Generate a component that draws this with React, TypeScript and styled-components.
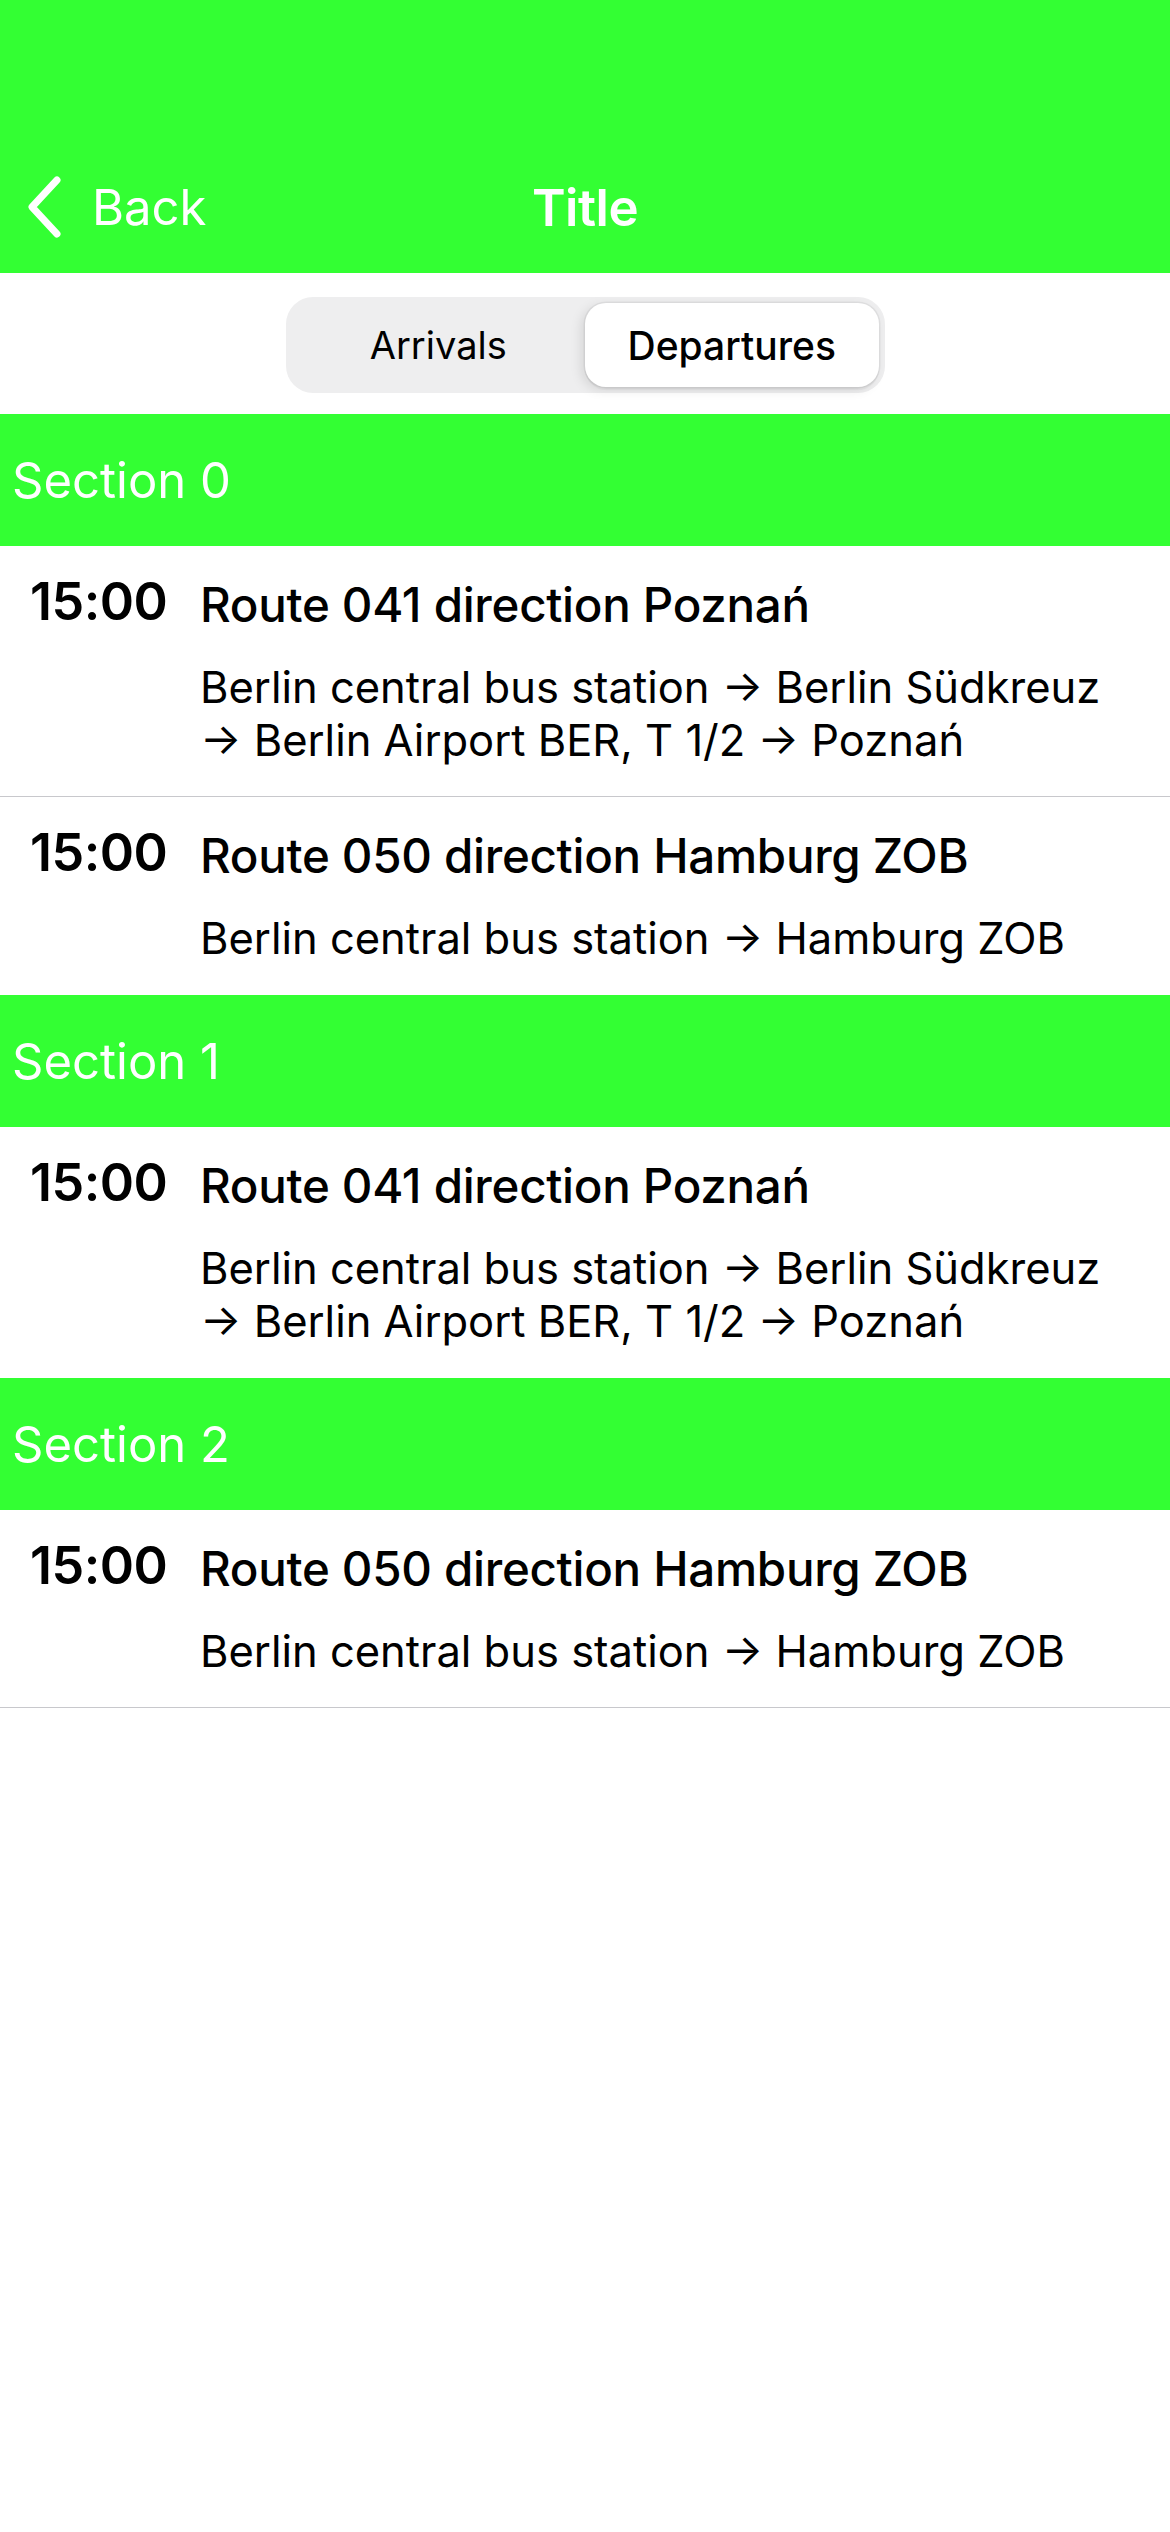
import React from "react";
import styled, { createGlobalStyle } from "styled-components";

const GREEN = "#33ff33";

const GlobalStyle = createGlobalStyle`
  html, body {
    margin: 0;
    padding: 0;
    background: #ffffff;
    font-family: Inter, "Noto Sans", "Liberation Sans", sans-serif;
    -webkit-font-smoothing: antialiased;
  }
  * { box-sizing: border-box; }
`;

const Page = styled.div`
  width: 1170px;
  min-height: 2532px;
  background: #ffffff;
`;

const NavBar = styled.header`
  height: 273px;
  background: ${GREEN};
  display: flex;
  align-items: flex-end;
`;

const NavContent = styled.div`
  height: 132px;
  width: 100%;
  display: grid;
  grid-template-columns: 1fr auto 1fr;
  align-items: center;
`;

const BackButton = styled.button`
  display: flex;
  align-items: center;
  gap: 28px;
  padding: 0 0 0 24px;
  margin: 0;
  border: none;
  background: transparent;
  color: #ffffff;
  font-family: inherit;
  font-size: 49px;
  font-weight: 400;
  justify-self: start;
  cursor: pointer;
`;

const NavTitle = styled.h1`
  margin: 0;
  color: #ffffff;
  font-size: 51px;
  font-weight: 600;
  letter-spacing: -0.5px;
`;

const SegmentWrap = styled.div`
  display: flex;
  justify-content: center;
  padding: 24px 0 21px;
`;

const SegmentControl = styled.div`
  width: 599px;
  height: 96px;
  background: #eeeeef;
  border-radius: 27px;
  padding: 6px;
  display: grid;
  grid-template-columns: 1fr 1fr;
`;

const Segment = styled.div<{ $selected?: boolean }>`
  display: flex;
  align-items: center;
  justify-content: center;
  border-radius: 21px;
  font-size: ${(p) => (p.$selected ? "39px" : "38px")};
  font-weight: ${(p) => (p.$selected ? 500 : 400)};
  color: #000000;
  background: ${(p) => (p.$selected ? "#ffffff" : "transparent")};
  box-shadow: ${(p) =>
    p.$selected
      ? "-4px 3px 12px rgba(0,0,0,0.10), 0 3px 1px rgba(0,0,0,0.04), 0 0 0 1.5px rgba(0,0,0,0.05)"
      : "none"};
`;

const SectionHeader = styled.div`
  height: 132px;
  background: ${GREEN};
  color: #ffffff;
  display: flex;
  align-items: center;
  padding-left: 12px;
  font-size: 49px;
  font-weight: 400;
`;

const Row = styled.div<{ $divider?: boolean }>`
  display: grid;
  grid-template-columns: 170px 1fr;
  padding: 30px 48px 29px 30px;
  border-bottom: 1px solid ${(p) => (p.$divider ? "#c8c8cc" : "transparent")};
`;

const Time = styled.div`
  font-size: 52px;
  line-height: 52px;
  font-weight: 600;
  color: #000000;
  letter-spacing: -0.5px;
`;

const Details = styled.div`
  display: flex;
  flex-direction: column;
  gap: 27px;
`;

const RouteTitle = styled.div`
  font-size: 47.5px;
  line-height: 58px;
  font-weight: 500;
  color: #000000;
  letter-spacing: -0.3px;
`;

const RouteStops = styled.div`
  font-size: 43.5px;
  line-height: 53px;
  font-weight: 400;
  color: #000000;
`;

const Chevron = () => (
  <svg width="40" height="64" viewBox="0 0 40 64" aria-hidden="true">
    <polyline
      points="33,5 8,32 33,59"
      fill="none"
      stroke="#ffffff"
      strokeWidth="7"
      strokeLinecap="round"
      strokeLinejoin="round"
    />
  </svg>
);

type Departure = { time: string; title: string; stops: string };

const poznan: Departure = {
  time: "15:00",
  title: "Route 041 direction Poznań",
  stops: "Berlin central bus station → Berlin Südkreuz → Berlin Airport BER, T 1/2 → Poznań",
};

const hamburg: Departure = {
  time: "15:00",
  title: "Route 050 direction Hamburg ZOB",
  stops: "Berlin central bus station → Hamburg ZOB",
};

const sections: { name: string; rows: Departure[] }[] = [
  { name: "Section 0", rows: [poznan, hamburg] },
  { name: "Section 1", rows: [poznan] },
  { name: "Section 2", rows: [hamburg] },
];

export default function App() {
  return (
    <Page>
      <GlobalStyle />
      <NavBar>
        <NavContent>
          <BackButton>
            <Chevron />
            Back
          </BackButton>
          <NavTitle>Title</NavTitle>
          <div />
        </NavContent>
      </NavBar>
      <SegmentWrap>
        <SegmentControl>
          <Segment>Arrivals</Segment>
          <Segment $selected>Departures</Segment>
        </SegmentControl>
      </SegmentWrap>
      {sections.map((section, si) => (
        <section key={section.name}>
          <SectionHeader>{section.name}</SectionHeader>
          {section.rows.map((row, ri) => {
            const lastInSection = ri === section.rows.length - 1;
            const lastOverall = si === sections.length - 1 && lastInSection;
            return (
              <Row key={ri} $divider={!lastInSection || lastOverall}>
                <Time>{row.time}</Time>
                <Details>
                  <RouteTitle>{row.title}</RouteTitle>
                  <RouteStops>{row.stops}</RouteStops>
                </Details>
              </Row>
            );
          })}
        </section>
      ))}
    </Page>
  );
}
